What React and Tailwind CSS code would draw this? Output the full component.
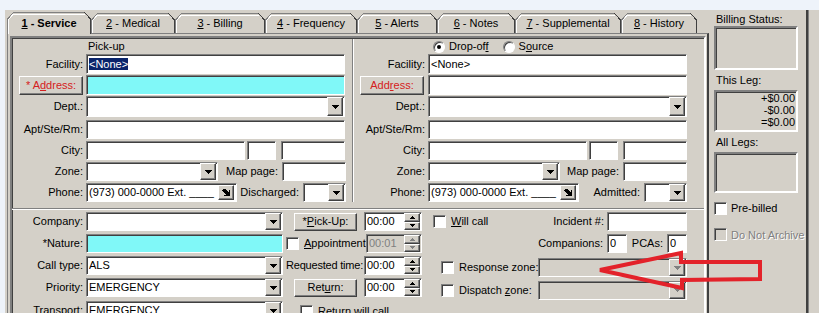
import React from 'react';

const sunken =
  'border border-t-[#808080] border-l-[#808080] border-b-white border-r-white shadow-[inset_1px_1px_0_#404040]';
const raised =
  'border border-t-white border-l-white border-b-[#404040] border-r-[#404040] shadow-[inset_-1px_-1px_0_#808080]';

const tabs = [
  { n: '1', label: ' - Service', w: 84, cls: 'w-[84px]', active: true },
  { n: '2', label: ' - Medical', w: 84, cls: 'w-[84px]' },
  { n: '3', label: ' - Billing', w: 90, cls: 'w-[90px]' },
  { n: '4', label: ' - Frequency', w: 92, cls: 'w-[92px]' },
  { n: '5', label: ' - Alerts', w: 80, cls: 'w-[80px]' },
  { n: '6', label: ' - Notes', w: 78, cls: 'w-[78px]' },
  { n: '7', label: ' - Supplemental', w: 106, cls: 'w-[106px]' },
  { n: '8', label: ' - History', w: 76, cls: 'w-[76px]' },
];

function Tri({ up, color = '#000', w = 7 }) {
  const d =
    w === 7
      ? 'M0 0h7v1h-1v1h-1v1h-1v1h-1v-1h-1v-1h-1v-1h-1z'
      : 'M0 0h5v1h-1v1h-1v1h-1v-1h-1v-1h-1z';
  const h = w === 7 ? 4 : 3;
  return (
    <svg width={w} height={h} viewBox={`0 0 ${w} ${h}`} shapeRendering="crispEdges" className={up ? 'rotate-180' : ''}>
      <path d={d} fill={color} />
    </svg>
  );
}

function DropBtn({ disabled }) {
  return (
    <div className={`${raised} bg-[#d4d0c8] w-[16px] h-full shrink-0 flex items-center justify-center`}>
      <Tri color={disabled ? '#808080' : '#000'} />
    </div>
  );
}

function SpinBtn({ disabled }) {
  const c = disabled ? '#808080' : '#000';
  return (
    <div className="w-[16px] h-full shrink-0 flex flex-col">
      <div className={`${raised} bg-[#d4d0c8] flex-1 flex items-center justify-center`}>
        <Tri up w={5} color={c} />
      </div>
      <div className={`${raised} bg-[#d4d0c8] flex-1 flex items-center justify-center`}>
        <Tri w={5} color={c} />
      </div>
    </div>
  );
}

function Field({ className = '', bg = 'bg-white', children, combo, spin, disabled, extra }) {
  return (
    <div className={`${sunken} ${bg} h-[19px] flex items-center pl-[2px] pr-px shrink-0 overflow-hidden ${className}`}>
      <span className={`flex-1 whitespace-nowrap overflow-hidden ${disabled ? 'text-[#808080]' : ''}`}>{children}</span>
      {extra}
      {combo && <DropBtn disabled={disabled} />}
      {spin && <SpinBtn disabled={disabled} />}
    </div>
  );
}

function Btn({ className = '', children }) {
  return (
    <div className={`${raised} bg-[#d4d0c8] flex items-center justify-center shrink-0 whitespace-nowrap ${className}`}>
      {children}
    </div>
  );
}

function Check({ className = '', disabled }) {
  return <div className={`${sunken} w-[13px] h-[13px] shrink-0 ${disabled ? 'bg-[#d4d0c8]' : 'bg-white'} ${className}`} />;
}

function Radio({ on }) {
  return (
    <div className="w-[12px] h-[12px] rounded-full border border-t-[#808080] border-l-[#808080] border-b-white border-r-white bg-white shadow-[inset_1px_1px_0_#404040] flex items-center justify-center shrink-0">
      {on && <div className="w-[4px] h-[4px] rounded-full bg-black" />}
    </div>
  );
}

function Label({ children, className = 'w-[71px]' }) {
  return <div className={`text-right shrink-0 whitespace-nowrap ${className}`}>{children}</div>;
}

function PhoneBtn() {
  return (
    <div className={`${raised} bg-[#d4d0c8] w-[16px] h-[15px] shrink-0 flex items-center justify-center mr-px`}>
      <svg width="9" height="9" viewBox="0 0 9 9" shapeRendering="crispEdges">
        <path d="M1 1h3v1h1v1h1v1h1v-2h1v6h-6v-1h2v-1h-1v-1h-1v-1h-1v-1h-1z" fill="#000" />
      </svg>
    </div>
  );
}

function Tab({ t }) {
  const h = t.active ? 22 : 20;
  const w = t.w;
  return (
    <div className={`relative ${t.cls} ${t.active ? 'h-[22px] -mb-px z-10 font-bold' : 'h-[20px]'} shrink-0 flex items-center justify-center`}>
      <svg width={w} height={h} className="absolute left-0 top-0" shapeRendering="crispEdges">
        <path d={`M0 ${h} V7 L6 1 H${w - 6} L${w} 7 V${h} Z`} fill="#d4d0c8" />
        <path d={`M0.5 ${h} V7 L6.5 0.5 H${w - 6.5}`} fill="none" stroke="#808080" />
        <path d={`M1.5 ${h} V7.5 L6.5 2 H${w - 6.5}`} fill="none" stroke="#fff" />
        <path d={`M${w - 6.5} 0.5 L${w - 0.5} 7 V${h}`} fill="none" stroke="#404040" />
      </svg>
      <span className="relative whitespace-nowrap pt-px">
        <span className="underline">{t.n}</span>
        {t.label}
      </span>
    </div>
  );
}

function AddressHalf({ side }) {
  const left = side === 'left';
  return (
    <div className={`${left ? 'w-[340px]' : 'w-[350px]'} flex flex-col`}>
      {left ? (
        <div className="h-[15px] leading-[15px] pl-[76px]">Pick-up</div>
      ) : (
        <div className="h-[15px] flex items-center pl-[79px]">
          <Radio on />
          <span className="ml-[4px]">
            Drop-of<span className="underline">f</span>
          </span>
          <div className="ml-[14px]">
            <Radio />
          </div>
          <span className="ml-[4px]">
            S<span className="underline">o</span>urce
          </span>
        </div>
      )}
      <div className="h-[20px] flex items-center">
        <Label>Facility:</Label>
        <Field className="ml-[3px] w-[259px] h-[20px]">
          {left ? <span className="bg-[#0a246a] text-white">&lt;None&gt;</span> : '<None>'}
        </Field>
      </div>
      <div className="mt-px h-[20px] flex items-center">
        <div className={`w-[74px] shrink-0 flex ${left ? 'pl-[7px]' : 'pl-[6px]'}`}>
          <Btn className="w-[64px] h-[19px] text-[#d42020]">
            {left ? (
              <>
                * A<span className="underline">d</span>dress:
              </>
            ) : (
              <>
                Add<span className="underline">r</span>ess:
              </>
            )}
          </Btn>
        </div>
        <Field className="w-[259px] h-[20px]" bg={left ? 'bg-[#80f8f8]' : 'bg-white'} />
      </div>
      <div className="mt-px h-[21px] flex items-center">
        <Label>Dept.:</Label>
        <Field className="ml-[3px] w-[259px] h-[21px]" combo />
      </div>
      <div className="mt-[3px] h-[19px] flex items-center">
        <Label>Apt/Ste/Rm:</Label>
        <Field className="ml-[3px] w-[259px]" />
      </div>
      <div className="mt-[2px] h-[19px] flex items-center">
        <Label>City:</Label>
        <Field className="ml-[3px] w-[159px]" />
        <Field className="ml-[2px] w-[29px]" />
        <Field className="ml-[5px] w-[64px]" />
      </div>
      <div className="mt-[2px] h-[19px] flex items-center">
        <Label>Zone:</Label>
        <Field className="ml-[3px] w-[132px]" combo />
        <div className="flex-1 text-right pr-[4px] whitespace-nowrap">Map page:</div>
        <Field className={`w-[64px] ${left ? 'mr-[6px]' : 'mr-[17px]'}`} />
      </div>
      <div className="mt-[2px] h-[19px] flex items-center">
        <Label>Phone:</Label>
        <Field className="ml-[3px] w-[151px]" extra={<PhoneBtn />}>
          (973) 000-0000 Ext. ____
        </Field>
        <div className="flex-1 text-right pr-[4px] whitespace-nowrap">{left ? 'Discharged:' : 'Admitted:'}</div>
        <Field className={`w-[43px] ${left ? 'mr-[6px]' : 'mr-[17px]'}`} combo />
      </div>
    </div>
  );
}

function BottomSection() {
  return (
    <div className="flex flex-col">
      <div className="mt-[2px] h-[19px] flex items-center">
        <Label>Company:</Label>
        <Field className="ml-[3px] w-[197px]" combo />
        <Btn className="ml-[11px] w-[63px] h-[18px]">
          * <span className="underline">P</span>ick-Up:
        </Btn>
        <Field className="ml-[7px] w-[58px]" spin>
          00:00
        </Field>
        <Check className="ml-[11px]" />
        <span className="ml-[5px] whitespace-nowrap">
          <span className="underline">W</span>ill call
        </span>
        <div className="flex-1 text-right pr-[3px] whitespace-nowrap">Incident #:</div>
        <Field className="w-[80px] mr-[17px]" />
      </div>
      <div className="mt-[3px] h-[19px] flex items-center">
        <Label>*Nature:</Label>
        <Field className="ml-[3px] w-[197px]" bg="bg-[#80f8f8]" />
        <Check className="ml-[3px]" />
        <span className="ml-[5px] w-[62px] whitespace-nowrap">
          <span className="underline">A</span>ppointment
        </span>
        <Field className="w-[56px]" bg="bg-[#d4d0c8]" spin disabled>
          00:01
        </Field>
        <div className="flex-1 text-right pr-[4px] whitespace-nowrap">Companions:</div>
        <Field className="w-[20px]">0</Field>
        <div className="w-[40px] text-right pr-[4px]">PCAs:</div>
        <Field className="w-[20px] mr-[17px]">0</Field>
      </div>
      <div className="mt-[3px] h-[19px] flex items-center">
        <Label>Call type:</Label>
        <Field className="ml-[3px] w-[197px]" combo>
          ALS
        </Field>
        <span className="ml-[3px] w-[78px] whitespace-nowrap tracking-[-0.2px]">Requested time:</span>
        <Field className="w-[58px]" spin>
          00:00
        </Field>
        <Check className="ml-[19px] mt-[4px]" />
        <span className="ml-[5px] w-[79px] whitespace-nowrap mt-[4px]">Response zone:</span>
        <Field className="w-[149px] mt-[4px]" bg="bg-[#d4d0c8]" combo disabled />
      </div>
      <div className="mt-[3px] h-[19px] flex items-center">
        <Label>Priority:</Label>
        <Field className="ml-[3px] w-[197px]" combo>
          EMERGENCY
        </Field>
        <Btn className="ml-[11px] w-[63px] h-[18px]">
          Ret<span className="underline">u</span>rn:
        </Btn>
        <Field className="ml-[7px] w-[58px]" spin>
          00:00
        </Field>
        <Check className="ml-[19px] mt-[5px]" />
        <span className="ml-[5px] w-[79px] whitespace-nowrap mt-[5px]">
          Dispatch <span className="underline">z</span>one:
        </span>
        <Field className="w-[149px] mt-[5px]" bg="bg-[#d4d0c8]" combo disabled />
      </div>
      <div className="mt-[4px] h-[19px] flex items-center">
        <Label>Transport:</Label>
        <Field className="ml-[3px] w-[197px]" combo>
          EMERGENCY
        </Field>
        <Check className="ml-[17px] mt-[2px]" />
        <span className="ml-[5px] whitespace-nowrap mt-[2px]">
          Return will call
        </span>
      </div>
    </div>
  );
}

function Sidebar() {
  const box = 'border-2 border-t-[#808080] border-l-[#808080] border-b-white border-r-white shadow-[inset_1px_1px_0_#404040]';
  return (
    <div className="ml-[5px] w-[92px] shrink-0 flex flex-col pt-[3px]">
      <div className="h-[13px] leading-[13px] pl-[2px]">Billing Status:</div>
      <div className={`${box} w-[84px] h-[44px]`} />
      <div className="h-[20px] leading-[20px] pl-[2px]">This Leg:</div>
      <div className={`${box} w-[84px] h-[42px] text-right pr-[1px] leading-[12px]`}>
        <div>+$0.00</div>
        <div>-$0.00</div>
        <div>=$0.00</div>
      </div>
      <div className="h-[20px] leading-[20px] pl-[2px]">All Legs:</div>
      <div className={`${box} w-[84px] h-[41px]`} />
      <div className="mt-[7px] flex items-center">
        <Check />
        <span className="ml-[4px]">Pre-billed</span>
      </div>
      <div className="mt-[10px] flex items-center">
        <Check disabled />
        <span className="ml-[4px] whitespace-nowrap text-[#808080] [text-shadow:1px_1px_0_#fff]">Do Not Archive</span>
      </div>
    </div>
  );
}

export default function App() {
  return (
    <div className="relative w-[819px] h-[313px] overflow-hidden bg-[#eef3fa] font-['Liberation_Sans',Arial,sans-serif] text-[11px] text-black">
      <div className="ml-[5px] mt-[10px] h-[303px] bg-[#d4d0c8] flex">
        <div className="w-[704px] shrink-0 pl-[2px] pt-[2px] flex flex-col">
          <div className="h-[21px] flex items-end">
            {tabs.map((t) => (
              <Tab key={t.n} t={t} />
            ))}
          </div>
          <div className="flex-1 border-t border-l border-t-[#808080] border-l-[#808080] border-r-2 border-r-[#404040] pt-[2px] pl-[2px] pr-px">
            <div className="h-full border-2 border-t-[#808080] border-l-[#808080] border-b-white border-r-white shadow-[inset_1px_1px_0_#404040] flex flex-col">
              <div className="flex pt-px">
                <AddressHalf side="left" />
                <div className="w-[2px] border-l border-l-[#808080] border-r border-r-white" />
                <AddressHalf side="right" />
              </div>
              <div className="mt-[6px] h-[2px] border-t border-t-[#808080] border-b border-b-white" />
              <BottomSection />
            </div>
          </div>
        </div>
        <Sidebar />
        <div className="w-[2px] bg-[#404040]" />
        <div className="w-px bg-[#808080]" />
      </div>
      <svg className="absolute left-0 top-0 pointer-events-none" width="819" height="313">
        <polygon
          points="600,270 681,253 681,262 760,262 760,279 682,280 682,288"
          fill="none"
          stroke="#e3222a"
          strokeWidth="4"
          strokeLinejoin="miter"
        />
      </svg>
    </div>
  );
}
